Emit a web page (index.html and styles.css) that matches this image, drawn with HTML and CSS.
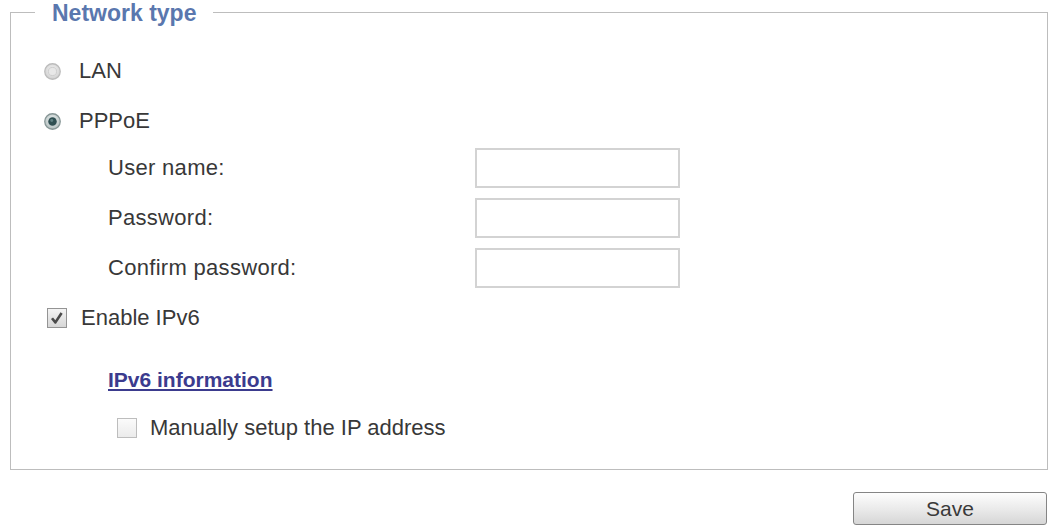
FILE: index.html
```html
<!DOCTYPE html>
<html>
<head>
<meta charset="utf-8">
<link rel="stylesheet" href="styles.css">
</head>
<body>
<div class="page">
  <fieldset class="netbox">
    <legend class="legend">Network type</legend>
    <div class="content">
      <div class="opt-row">
        <svg class="radio" width="17" height="17" viewBox="0 0 16 16">
          <defs>
            <radialGradient id="rgOff" cx="50%" cy="40%" r="60%">
              <stop offset="0" stop-color="#f2f2f2"/>
              <stop offset="1" stop-color="#d0d0d0"/>
            </radialGradient>
          </defs>
          <circle cx="8" cy="8" r="7.3" fill="url(#rgOff)" stroke="#bcbcbc" stroke-width="1.2"/>
          <circle cx="8" cy="8" r="3.8" fill="#e8e8e8" stroke="#cdcdcd" stroke-width="0.9"/>
        </svg>
        <span class="opt-label">LAN</span>
      </div>
      <div class="opt-row">
        <svg class="radio" width="17" height="17" viewBox="0 0 16 16">
          <defs>
            <radialGradient id="rgOn" cx="50%" cy="40%" r="60%">
              <stop offset="0" stop-color="#eef2f2"/>
              <stop offset="1" stop-color="#b3bfbf"/>
            </radialGradient>
          </defs>
          <circle cx="8" cy="8" r="7.3" fill="url(#rgOn)" stroke="#879696" stroke-width="1.2"/>
          <circle cx="8" cy="8" r="4" fill="#2f4f52"/>
          <circle cx="7.3" cy="7.1" r="1.4" fill="#5f8083"/>
        </svg>
        <span class="opt-label">PPPoE</span>
      </div>
      <div class="fields">
        <span class="field-label">User name:</span>
        <span class="field-box"></span>
        <span class="field-label">Password:</span>
        <span class="field-box"></span>
        <span class="field-label">Confirm password:</span>
        <span class="field-box"></span>
      </div>
      <div class="opt-row check-row">
        <span class="checkbox checked">
          <svg width="16" height="16" viewBox="0 0 16 16">
            <path d="M3 8.2 L6.4 12.4 L12.6 3" fill="none" stroke="#4a4a4a" stroke-width="2.6" stroke-linejoin="round"/>
          </svg>
        </span>
        <span class="opt-label">Enable IPv6</span>
      </div>
      <div class="link-row">
        <a class="info-link" href="#">IPv6 information</a>
      </div>
      <div class="manual-row">
        <span class="checkbox empty"></span>
        <span class="opt-label">Manually setup the IP address</span>
      </div>
    </div>
  </fieldset>
  <div class="actions">
    <button class="save-btn" type="button">Save</button>
  </div>
</div>
</body>
</html>
```

FILE: styles.css
```css
html, body {
  margin: 0;
  padding: 0;
  background: #ffffff;
}

body {
  font-family: "Liberation Sans", Arial, sans-serif;
  font-size: 22px;
  color: #383838;
}

.page {
  padding: 0 3px 0 10px;
}

.netbox {
  margin: 0;
  padding: 0 0 18px 0;
  border: 1px solid #bdbdbd;
  min-width: 0;
}

.legend {
  margin-left: 24px;
  padding: 2px 17px 0;
  font-size: 23px;
  line-height: 22px;
  font-weight: bold;
  color: #5a77ae;
}

.content {
  padding: 22px 0 0 33px;
}

.opt-row {
  height: 50px;
  display: flex;
  align-items: center;
}

.radio {
  flex: none;
  margin-right: 18px;
}

.opt-label {
  line-height: 24px;
}

.fields {
  margin-top: 2px;
  margin-left: 64px;
  display: grid;
  grid-template-columns: 367px 205px;
  grid-auto-rows: 40px;
  row-gap: 10px;
  align-items: center;
}

.field-label {
  letter-spacing: 0.3px;
}

.field-box {
  display: block;
  box-sizing: border-box;
  height: 40px;
  border: 2px solid #d3d3d3;
  background: #ffffff;
}

.check-row {
  margin-top: 5px;
}

.checkbox {
  flex: none;
  box-sizing: border-box;
  width: 20px;
  height: 20px;
  display: flex;
  align-items: center;
  justify-content: center;
}

.checkbox.checked {
  margin-left: 3px;
  margin-right: 14px;
  border: 1px solid #949494;
  background: linear-gradient(#f4f4f4, #d6d6d6);
}

.checkbox.empty {
  margin-right: 13px;
  border: 1px solid #bdbdbd;
  background: linear-gradient(#fbfbfb, #ebebeb);
}

.link-row {
  margin-top: 12px;
  height: 50px;
  display: flex;
  align-items: center;
  padding-left: 64px;
}

.info-link {
  font-size: 21px;
  font-weight: bold;
  color: #3b3b8e;
  text-decoration: underline;
}

.manual-row {
  height: 46px;
  display: flex;
  align-items: center;
  padding-left: 73px;
}

.actions {
  display: flex;
  justify-content: flex-end;
  padding: 22px 1px 0 0;
}

.save-btn {
  width: 194px;
  height: 33px;
  font-family: "Liberation Sans", Arial, sans-serif;
  font-size: 21px;
  color: #3a3a3a;
  border: 1px solid #858585;
  border-radius: 3px;
  background: linear-gradient(#fdfdfd, #e9e9e9 55%, #d6d6d6);
  padding: 0;
}
```
